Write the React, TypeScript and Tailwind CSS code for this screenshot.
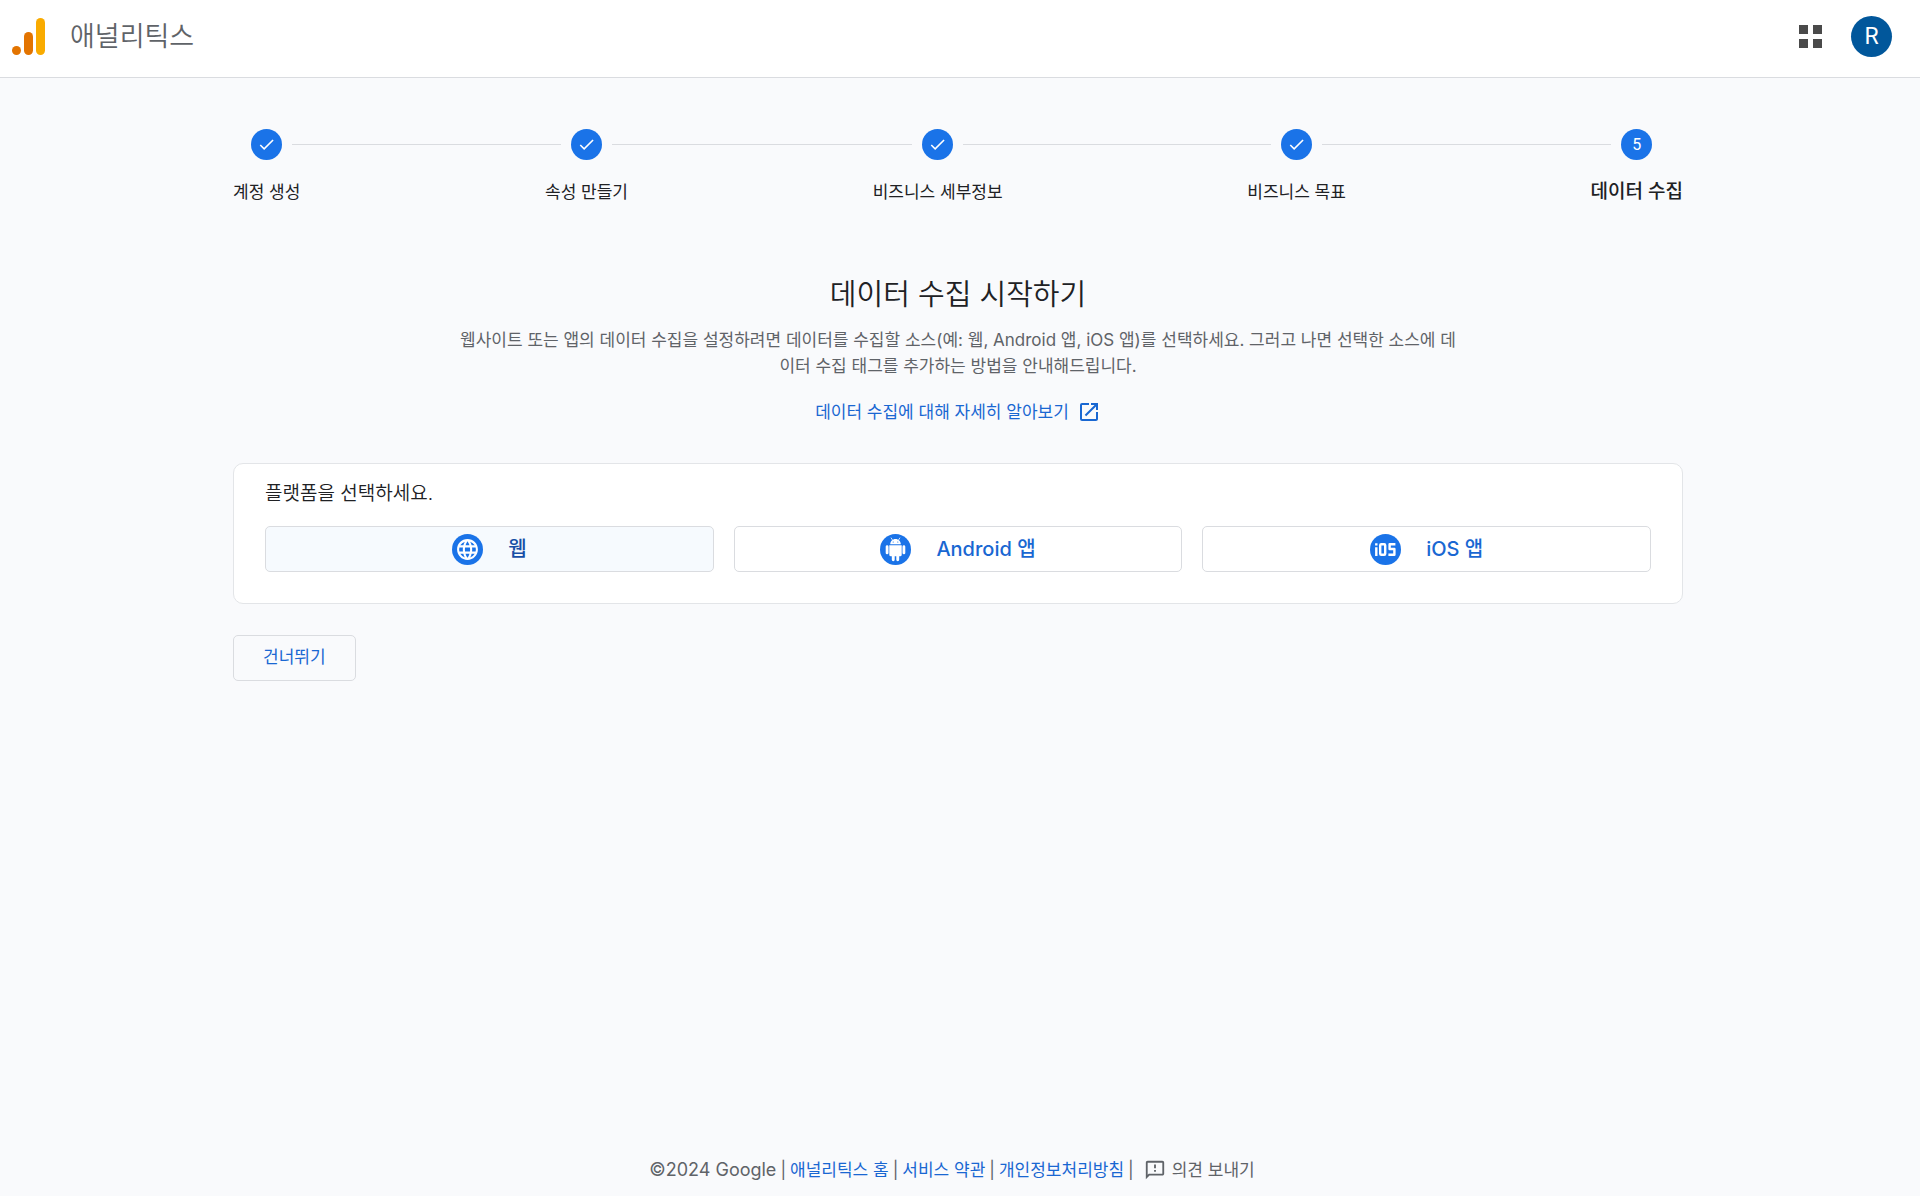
import { MdCheck, MdLanguage, MdOpenInNew, MdOutlineFeedback } from 'react-icons/md';
import type { ReactNode } from 'react';

const steps = ['계정 생성', '속성 만들기', '비즈니스 세부정보', '비즈니스 목표', '데이터 수집'];
const currentStep = 4;

function AnalyticsLogo() {
  return (
    <svg width="34" height="38" viewBox="0 0 34 38" aria-hidden="true">
      <rect x="24" y="0" width="9" height="37" rx="4.5" fill="#f9ab00" />
      <rect x="12" y="14" width="9" height="23" rx="4.5" fill="#e37400" />
      <circle cx="4.5" cy="32.5" r="4.5" fill="#e37400" />
    </svg>
  );
}

function AppsIcon() {
  return (
    <svg width="24" height="24" viewBox="0 0 24 24" fill="#4a4a4a" aria-hidden="true">
      <rect x="0" y="0" width="9" height="9" />
      <rect x="14" y="0" width="9" height="9" />
      <rect x="0" y="14" width="9" height="9" />
      <rect x="14" y="14" width="9" height="9" />
    </svg>
  );
}

function WebIcon() {
  return (
    <span className="flex size-[31px] items-center justify-center rounded-full bg-[#1a73e8] text-white">
      <MdLanguage size={25} />
    </span>
  );
}

function AndroidIcon() {
  return (
    <svg width="31" height="31" viewBox="0 0 31 31" aria-hidden="true">
      <circle cx="15.5" cy="15.5" r="15.5" fill="#1a73e8" />
      <g fill="#fff">
        <path d="M10.2 10.3c0-3 2.4-5.3 5.3-5.3s5.3 2.3 5.3 5.3z" />
        <path d="M12.6 6.2 11.2 4M18.4 6.2 19.8 4" stroke="#fff" strokeWidth="0.8" strokeLinecap="round" />
        <path d="M9.3 11.3h12.4v9.4a1.6 1.6 0 0 1-1.6 1.6h-.9v3.5a1.4 1.4 0 0 1-2.9 0v-3.5h-1.6v3.5a1.4 1.4 0 0 1-2.9 0v-3.5h-.9a1.6 1.6 0 0 1-1.6-1.6z" />
        <rect x="5.7" y="11.3" width="2.8" height="9" rx="1.4" />
        <rect x="22.5" y="11.3" width="2.8" height="9" rx="1.4" />
      </g>
      <circle cx="13.2" cy="8" r="0.6" fill="#1a73e8" />
      <circle cx="17.8" cy="8" r="0.6" fill="#1a73e8" />
    </svg>
  );
}

function IosIcon() {
  return (
    <svg width="31" height="31" viewBox="0 0 31 31" fill="none" aria-hidden="true">
      <circle cx="15.5" cy="15.5" r="15.5" fill="#1a73e8" />
      <g stroke="#fff" strokeWidth="2.4" strokeLinejoin="round">
        <path d="M6.3 13.2V22M6.3 9.2v2.2" />
        <rect x="10.2" y="10.3" width="5" height="10.5" rx="1" />
        <path d="M25.4 10.3h-5.8v4.7h4.8v5.8h-6" />
      </g>
    </svg>
  );
}

function Stepper() {
  return (
    <ol className="flex">
      {steps.map((label, i) => {
        const last = i === steps.length - 1;
        return (
          <li key={label} className={last ? 'flex' : 'flex flex-auto'}>
            <div className="flex shrink-0 flex-col items-center">
              <div className="flex w-full items-center gap-2.5">
                <span className={i === 0 ? 'h-px flex-1' : 'h-px flex-1 bg-[#dadce0]'} />
                <span className="flex size-[31px] items-center justify-center rounded-full bg-[#1a73e8] font-[Roboto] text-base text-white">
                  {i < currentStep ? <MdCheck size={19} /> : i + 1}
                </span>
                <span className={last ? 'h-px flex-1' : 'h-px flex-1 bg-[#dadce0]'} />
              </div>
              <span
                className={
                  i === currentStep
                    ? 'mt-[18px] text-[19px] leading-7 font-medium whitespace-nowrap'
                    : 'mt-[18px] text-[17px] leading-7 whitespace-nowrap'
                }
              >
                {label}
              </span>
            </div>
            {!last && <span className="mt-[15px] h-px flex-1 bg-[#dadce0]" />}
          </li>
        );
      })}
    </ol>
  );
}

function PlatformButton({ icon, label, active = false }: { icon: ReactNode; label: string; active?: boolean }) {
  return (
    <button
      type="button"
      className={
        active
          ? 'flex h-[46px] items-center justify-center gap-[25px] rounded-[5px] border border-[#dadce0] bg-[#f6fafe] text-[20px] font-medium text-[#174ea6]'
          : 'flex h-[46px] items-center justify-center gap-[25px] rounded-[5px] border border-[#dadce0] bg-white text-[20px] font-medium text-[#1967d2]'
      }
    >
      {icon}
      <span>{label}</span>
    </button>
  );
}

function App() {
  return (
    <div className="flex min-h-screen flex-col bg-[#f9fafc] font-[Inter,'Noto_Sans_CJK_KR',sans-serif] text-[#202124]">
      <header className="flex h-[78px] items-center border-b border-[#dadce0] bg-white pr-7 pb-1 pl-3">
        <AnalyticsLogo />
        <span className="ml-6 text-[27px] leading-9 font-[350] text-[#5f6368]">애널리틱스</span>
        <div className="ml-auto flex items-center gap-7">
          <button type="button" aria-label="앱">
            <AppsIcon />
          </button>
          <button
            type="button"
            className="flex size-[41px] items-center justify-center rounded-full bg-[#01579b] pt-0.5 font-[Roboto] text-[23px] text-white"
          >
            R
          </button>
        </div>
      </header>

      <main className="flex flex-1 flex-col pt-[51px] pr-1">
        <div className="mx-auto w-full max-w-[1450px]">
          <Stepper />

          <section className="mt-[69px] flex flex-col items-center text-center">
            <h1 className="text-[29px] leading-10 font-[350]">데이터 수집 시작하기</h1>
            <p className="mt-3 max-w-[1004px] text-[17px] leading-[26px] text-[#5f6368]">
              웹사이트 또는 앱의 데이터 수집을 설정하려면 데이터를 수집할 소스(예: 웹, Android 앱, iOS 앱)를
              선택하세요. 그러고 나면 선택한 소스에 데이터 수집 태그를 추가하는 방법을 안내해드립니다.
            </p>
            <a href="#" className="mt-5 flex items-center gap-2 text-[17px] leading-[26px] text-[#1967d2]">
              데이터 수집에 대해 자세히 알아보기
              <MdOpenInNew size={24} />
            </a>
          </section>

          <section className="mt-[38px] rounded-[10px] border border-[#e3e5e8] bg-white px-[31px] pt-4 pb-[31px]">
            <h2 className="text-[19px] leading-7 font-[350]">플랫폼을 선택하세요.</h2>
            <div className="mt-[18px] grid grid-cols-3 gap-5">
              <PlatformButton icon={<WebIcon />} label="웹" active />
              <PlatformButton icon={<AndroidIcon />} label="Android 앱" />
              <PlatformButton icon={<IosIcon />} label="iOS 앱" />
            </div>
          </section>

          <button
            type="button"
            className="mt-[31px] h-[46px] rounded-[5px] border border-[#dadce0] px-[29px] text-[17px] text-[#1967d2]"
          >
            건너뛰기
          </button>
        </div>
      </main>

      <footer className="flex items-center justify-center gap-1 pr-4 pb-3 text-[17px] leading-7 text-[#5f6368]">
        <span className="text-lg">©2024 Google</span>
        <span>|</span>
        <a href="#" className="text-[#1967d2]">애널리틱스 홈</a>
        <span>|</span>
        <a href="#" className="text-[#1967d2]">서비스 약관</a>
        <span>|</span>
        <a href="#" className="text-[#1967d2]">개인정보처리방침</a>
        <span>|</span>
        <button type="button" className="ml-1.5 flex items-center gap-1.5">
          <MdOutlineFeedback size={22} />
          의견 보내기
        </button>
      </footer>
    </div>
  );
}

export default App;
